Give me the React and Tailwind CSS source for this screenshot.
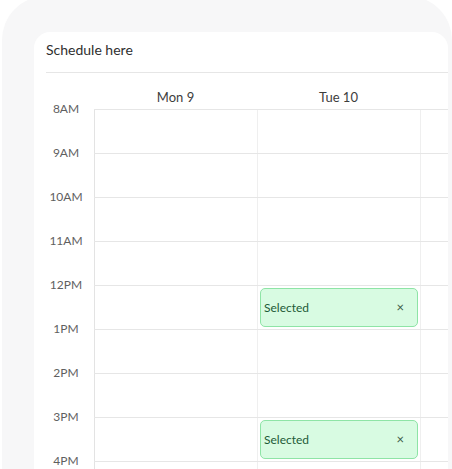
import React from 'react';

const hours = ['8AM', '9AM', '10AM', '11AM', '12PM', '1PM', '2PM', '3PM', '4PM', '5PM'];
const days = ['Mon 9', 'Tue 10', 'Wed 11'];

// rowIndex -> dayIndex of selected slots
const selected = { 4: 1, 7: 1 };

const EventChip = () => (
  <div className="flex h-[39px] items-center justify-between rounded-[5px] border border-[#8ee4a6] bg-[#d8fbe2] pl-[3px] pr-[13px] text-[12px] text-[#1d5a37]">
    <span>Selected</span>
    <span className="text-[13px] leading-none text-[#3b5a47]">×</span>
  </div>
);

const App = () => {
  return (
    <div className="h-[469px] w-[452px] overflow-hidden bg-white font-['Lato',sans-serif]">
      <div className="ml-[2px] mt-[-4px] h-[520px] rounded-[44px] bg-[#f7f7f8] pl-[32px] pr-[4px] pt-[36px]">
        <div className="h-[480px] overflow-hidden rounded-t-2xl bg-white pl-3">
          {/* header */}
          <div className="border-b border-[#e6e6e6] pb-[12px] pt-[8px] text-[14px] leading-[20px] text-[#2f2f2f]">
            Schedule here
          </div>

          {/* day titles */}
          <div className="flex h-[36px] pt-[14px]">
            <div className="w-[48px] shrink-0" />
            {days.map((d) => (
              <div key={d} className="w-[163px] shrink-0 text-center text-[13px] leading-[20px] text-[#3d3d3d]">
                {d}
              </div>
            ))}
          </div>

          <div className="flex">
            {/* hour labels */}
            <div className="-mt-[10px] w-[40px] shrink-0">
              {hours.map((h) => (
                <div key={h} className="h-[44px] text-center text-[12px] leading-[20px] text-[#5f5f5f]">
                  {h}
                </div>
              ))}
            </div>

            {/* grid */}
            <div className="ml-[8px] shrink-0">
              {hours.map((h, r) => (
                <div key={h} className="flex h-[44px] border-t border-[#e6e6e6]">
                  {days.map((d, c) => (
                    <div
                      key={d}
                      className={
                        c === 0
                          ? 'w-[163px] shrink-0 border-l border-[#e3e3e3] px-[2px] pt-[2px]'
                          : 'w-[163px] shrink-0 border-l border-[#efefef] px-[2px] pt-[2px]'
                      }
                    >
                      {selected[r] === c && <EventChip />}
                    </div>
                  ))}
                </div>
              ))}
            </div>
          </div>
        </div>
      </div>
    </div>
  );
};

export default App;
